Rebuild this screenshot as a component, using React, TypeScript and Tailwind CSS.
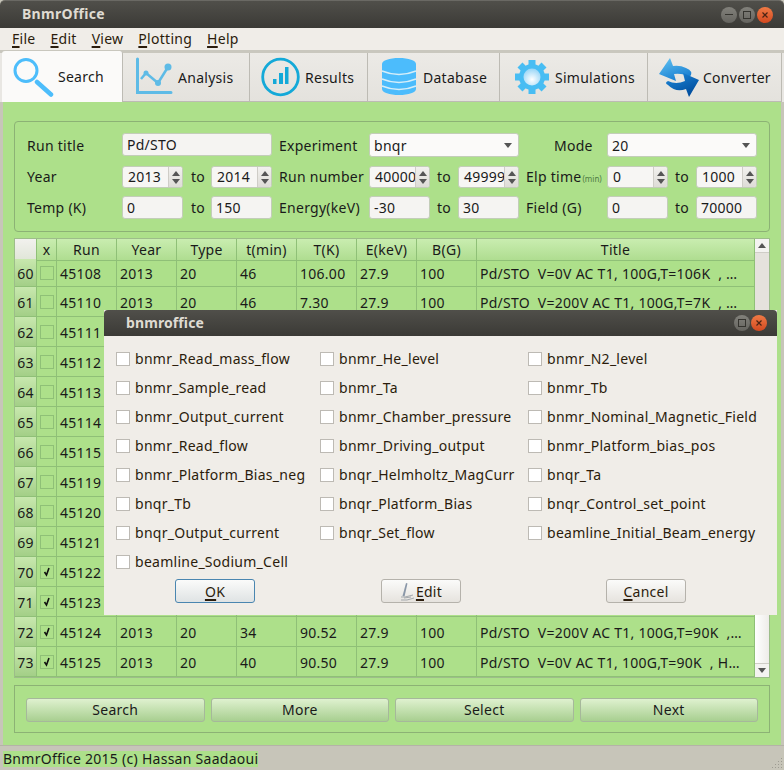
import type { ReactNode } from "react";

const titleBar = "bg-gradient-to-b from-[#504f4a] to-[#3b3a36]";

const WinBtn = ({ kind }: { kind: "min" | "max" | "close" }) => {
  if (kind === "close") {
    return (
      <span className="flex h-[16px] w-[16px] items-center justify-center rounded-full bg-gradient-to-b from-[#ef7a45] to-[#d2481f]">
        <svg width="8" height="8" viewBox="0 0 8 8">
          <path d="M1.5 1.5l5 5M6.5 1.5l-5 5" stroke="#4a2414" strokeWidth="1.2" />
        </svg>
      </span>
    );
  }
  return (
    <span className="flex h-[16px] w-[16px] items-center justify-center rounded-full bg-gradient-to-b from-[#82817b] to-[#65645f]">
      {kind === "min" ? (
        <span className="h-[1px] w-[8px] bg-[#35342f]" />
      ) : (
        <span className="h-[8px] w-[8px] border border-[#35342f]" />
      )}
    </span>
  );
};

const SearchIcon = () => (
  <svg width="42" height="42" viewBox="12 53 42 42" className="shrink-0">
    <circle cx="26" cy="67.5" r="11" fill="none" stroke="#4dbdfb" strokeWidth="3" />
    <path d="M37 79l14 12.5" stroke="#4dbdfb" strokeWidth="4.5" strokeLinecap="round" />
  </svg>
);

const AnalysisIcon = () => (
  <svg width="40" height="40" viewBox="134 56 40 40" className="shrink-0">
    <path d="M137.5 58v33.5H171" fill="none" stroke="#5ebbe6" strokeWidth="3" strokeLinecap="round" />
    <path d="M141 78l5-6 12 10 10-16" fill="none" stroke="#5ebbe6" strokeWidth="2.5" />
    <circle cx="146" cy="72" r="2.5" fill="#5ebbe6" />
    <circle cx="158" cy="82" r="3" fill="#5ebbe6" />
    <circle cx="168" cy="66" r="3.5" fill="#5ebbe6" />
  </svg>
);

const ResultsIcon = () => (
  <svg width="40" height="40" viewBox="260 56 40 40" className="shrink-0">
    <circle cx="280.5" cy="76" r="17.8" fill="none" stroke="#14a9d8" strokeWidth="2.8" />
    <path d="M273 78h3.5v5H273zM279 72h4v11h-4zM285 66h3.5v17H285z" fill="#14a9d8" />
  </svg>
);

const DatabaseIcon = () => (
  <svg width="36" height="40" viewBox="381 55 36 40" className="shrink-0">
    <path d="M382 62c0-3.500 7.500-6 17-6s17 2.500 17 6v25c0 3.500-7.500 6-17 6s-17-2.500-17-6z" fill="#4cbcfc" />
    <g fill="none" stroke="#d5eef9" strokeWidth="1.4">
      <path d="M382 69q17 7 34 0" />
      <path d="M382 77q17 7 34 0" />
      <path d="M382 84q17 7 34 0" />
    </g>
  </svg>
);

const GearIcon = () => (
  <svg width="38" height="38" viewBox="513 59 38 38" className="shrink-0">
    <defs>
      <radialGradient id="gearHole" cx="0.5" cy="0.65" r="0.7">
        <stop offset="0" stopColor="#ffffff" />
        <stop offset="1" stopColor="#8fd2f6" />
      </radialGradient>
    </defs>
    {[0, 45, 90, 135, 180, 225, 270, 315].map((a) => (
      <rect key={a} x="528.500" y="61" width="7" height="8" fill="#48bdf3" transform={`rotate(${a} 532 78)`} />
    ))}
    <circle cx="532" cy="78" r="13" fill="#48bdf3" />
    <circle cx="532" cy="78" r="8.500" fill="url(#gearHole)" />
  </svg>
);

const ConverterIcon = () => (
  <svg width="46" height="42" viewBox="656 55 46 42" className="shrink-0">
    <defs>
      <linearGradient id="arrowLight" x1="0" y1="0" x2="0.5" y2="1">
        <stop offset="0" stopColor="#63c4f2" />
        <stop offset="1" stopColor="#1a80d2" />
      </linearGradient>
      <linearGradient id="arrowDark" x1="0" y1="0" x2="0.6" y2="1">
        <stop offset="0" stopColor="#1f8bdc" />
        <stop offset="1" stopColor="#004c9c" />
      </linearGradient>
    </defs>
    <path d="M670 57L659 73l17 7-2-7q9-1 16 3 4-6-4-9-6-3-13-2z" fill="url(#arrowLight)" />
    <path d="M683 72l16 7-10 17-3-8q-10 4-18-4-4-2 0-4 8 4 17 0z" fill="url(#arrowDark)" />
  </svg>
);

const tabs = [
  { label: "Search", w: "w-[121px]", pl: "pl-[10px]", gap: "gap-[4px]", icon: <SearchIcon /> },
  { label: "Analysis", w: "w-[127px]", pl: "pl-[11px]", gap: "gap-[4px]", icon: <AnalysisIcon /> },
  { label: "Results", w: "w-[118px]", pl: "pl-[10px]", gap: "gap-[5px]", icon: <ResultsIcon /> },
  { label: "Database", w: "w-[132px]", pl: "pl-[13px]", gap: "gap-[6px]", icon: <DatabaseIcon /> },
  { label: "Simulations", w: "w-[148px]", pl: "pl-[13px]", gap: "gap-[4px]", icon: <GearIcon /> },
  { label: "Converter", w: "w-[134px]", pl: "pl-[8px]", gap: "gap-[1px]", icon: <ConverterIcon /> },
];

const Input = ({ value }: { value: string }) => (
  <div className="flex h-[23px] items-center overflow-hidden rounded-[3px] border border-[#c3cdb9] bg-[#f5f4f2] pl-[4px] text-[14px]">
    {value}
  </div>
);

const Spin = ({ value }: { value: string }) => (
  <div className="flex h-[22px] self-end overflow-hidden rounded-[3px] border border-[#c3cdb9] bg-[#f7f6f4]">
    <div className="flex-1 overflow-hidden whitespace-nowrap pl-[5px] text-[14px] leading-[20px]">{value}</div>
    <div className="flex w-[14px] shrink-0 flex-col items-center justify-center gap-[3px] border-l border-[#cfcdc7] bg-gradient-to-b from-[#f2f1ee] to-[#dedcd7]">
      <span className="h-0 w-0 border-x-[4px] border-b-[5px] border-x-transparent border-b-[#555]" />
      <span className="h-0 w-0 border-x-[4px] border-t-[5px] border-x-transparent border-t-[#555]" />
    </div>
  </div>
);

const Select = ({ value, span }: { value: string; span: string }) => (
  <div className={`${span} flex h-[24px] items-center justify-between rounded-[3px] border border-[#c3cdb9] bg-[#fbfaf9] pl-[4px] pr-[6px] text-[14px]`}>
    {value}
    <span className="h-0 w-0 border-x-[4px] border-t-[5px] border-x-transparent border-t-[#555]" />
  </div>
);

const Label = ({ children, className = "" }: { children: ReactNode; className?: string }) => (
  <div className={`flex items-center whitespace-nowrap text-[14px] ${className}`}>{children}</div>
);

type Row = { n: number; run: number; on?: boolean; t?: string; temp?: string; title?: string };

const rows: Row[] = [
  { n: 60, run: 45108, t: "46", temp: "106.00", title: "Pd/STO  V=0V AC T1, 100G,T=106K  , …" },
  { n: 61, run: 45110, t: "46", temp: "7.30", title: "Pd/STO  V=200V AC T1, 100G,T=7K  , …" },
  { n: 62, run: 45111 },
  { n: 63, run: 45112 },
  { n: 64, run: 45113 },
  { n: 65, run: 45114 },
  { n: 66, run: 45115 },
  { n: 67, run: 45119 },
  { n: 68, run: 45120 },
  { n: 69, run: 45121 },
  { n: 70, run: 45122, on: true },
  { n: 71, run: 45123, on: true },
  { n: 72, run: 45124, on: true, t: "34", temp: "90.52", title: "Pd/STO  V=200V AC T1, 100G,T=90K  ,…" },
  { n: 73, run: 45125, on: true, t: "40", temp: "90.50", title: "Pd/STO  V=0V AC T1, 100G,T=90K  , H…" },
];

const tableCols = "grid grid-cols-[22px_20px_60px_60px_60px_60px_60px_60px_60px_278px]";
const cell = "flex items-center overflow-hidden whitespace-pre border-r border-b border-[#8fc077] pl-[3px] pt-[1px] text-[14px]";
const head = "flex items-center justify-center border-r border-b border-[#8fc077] bg-gradient-to-b from-[#c9edb0] to-[#afdd90] text-[14px]";

const TableRow = ({ r }: { r: Row }) => {
  const filled = r.temp !== undefined;
  return (
    <div className={`${tableCols} ${r.n === 60 ? "h-[28px]" : "h-[30px]"}`}>
      <div className="flex items-center justify-center border-r border-b border-[#8fc077] bg-gradient-to-b from-[#c8e8ae] to-[#a3cf87] pt-[2px] text-[14px]">
        {r.n}
      </div>
      <div className="flex items-center justify-center border-r border-b border-[#8fc077]">
        <span className="flex h-[14px] w-[14px] items-center justify-center border border-[#8fc077]">
          {r.on && (
            <svg width="10" height="10" viewBox="0 0 10 10">
              <path d="M2.500 5l2 3 2.500-7" fill="none" stroke="#111" strokeWidth="1.600" />
            </svg>
          )}
        </span>
      </div>
      <div className={cell}>{r.run}</div>
      <div className={cell}>{filled && "2013"}</div>
      <div className={cell}>{filled && "20"}</div>
      <div className={cell}>{r.t}</div>
      <div className={cell}>{r.temp}</div>
      <div className={cell}>{filled && "27.9"}</div>
      <div className={cell}>{filled && "100"}</div>
      <div className={cell}>{r.title}</div>
    </div>
  );
};

const Mnemonic = ({ first, rest }: { first: string; rest: string }) => (
  <span>
    <span className="underline decoration-2 underline-offset-2">{first}</span>
    {rest}
  </span>
);

const channels = [
  "bnmr_Read_mass_flow", "bnmr_He_level", "bnmr_N2_level",
  "bnmr_Sample_read", "bnmr_Ta", "bnmr_Tb",
  "bnmr_Output_current", "bnmr_Chamber_pressure", "bnmr_Nominal_Magnetic_Field",
  "bnmr_Read_flow", "bnmr_Driving_output", "bnmr_Platform_bias_pos",
  "bnmr_Platform_Bias_neg", "bnqr_Helmholtz_MagCurr", "bnqr_Ta",
  "bnqr_Tb", "bnqr_Platform_Bias", "bnqr_Control_set_point",
  "bnqr_Output_current", "bnqr_Set_flow", "beamline_Initial_Beam_energy",
  "beamline_Sodium_Cell",
];

const Dialog = () => (
  <div className="absolute left-[104px] top-[310px] h-[305px] w-[673px] bg-[#f0ede8] text-[#2b1c0c]">
    <div className={`flex h-[26px] items-center justify-between rounded-t-[4px] pl-[22px] pr-[10px] ${titleBar}`}>
      <span className="pb-[2px] text-[14px] font-bold tracking-[0.1px] text-[#dfdbd2]">bnmroffice</span>
      <div className="flex gap-[1px]">
        <WinBtn kind="max" />
        <WinBtn kind="close" />
      </div>
    </div>
    <div className="grid grid-cols-[204px_208px_1fr] pl-[12px] pt-[8px]">
      {channels.map((c) => (
        <div key={c} className="flex h-[29px] items-center gap-[5px] whitespace-nowrap text-[14px]">
          <span className="h-[14px] w-[14px] shrink-0 border border-[#bdbab4] bg-white" />
          {c}
        </div>
      ))}
    </div>
    <div className="mt-[3px] flex text-[14px]">
      <button className="ml-[71px] h-[24px] w-[80px] rounded-[3px] border border-[#4a86b0] bg-gradient-to-b from-[#fbfbfa] to-[#dfe3e4]">
        <Mnemonic first="O" rest="K" />
      </button>
      <button className="ml-[126px] flex h-[24px] w-[80px] items-center justify-center rounded-[3px] border border-[#b5b2ab] bg-gradient-to-b from-[#fbfbfa] to-[#e6e3de]">
        <svg width="16" height="19" viewBox="0 0 16 19" className="shrink-0">
          <path d="M6 1L2.500 14l2 .5L7.500 1.500z" fill="#8a97a8" />
          <path d="M1 15h4l8-2M1 18h6l7-2M4 16l7-1" fill="none" stroke="#a5a9ad" strokeWidth="1" />
        </svg>
        <Mnemonic first="E" rest="dit" />
      </button>
      <button className="ml-[145px] h-[24px] w-[80px] rounded-[3px] border border-[#b5b2ab] bg-gradient-to-b from-[#fbfbfa] to-[#e6e3de]">
        <Mnemonic first="C" rest="ancel" />
      </button>
    </div>
  </div>
);

export default function App() {
  return (
    <div className="relative flex h-[770px] w-[784px] flex-col overflow-hidden bg-[#c7c5b9] font-['Noto_Sans',sans-serif] tracking-[0.27px] text-[#1a1a1a]">
      <div className={`flex h-[28px] shrink-0 items-center justify-between rounded-t-[5px] border-t border-[#6a6964] pl-[22px] pr-[11px] ${titleBar}`}>
        <span className="pb-[2px] text-[14px] font-bold tracking-[0.3px] text-[#dfdbd2]">BnmrOffice</span>
        <div className="flex gap-[2px]">
          <WinBtn kind="min" />
          <WinBtn kind="max" />
          <WinBtn kind="close" />
        </div>
      </div>

      <div className="flex h-[22px] shrink-0 items-center gap-[15px] bg-[#f0ede8] pb-[1px] pl-[12px] text-[14px] text-[#2b1c0c]">
        <Mnemonic first="F" rest="ile" />
        <Mnemonic first="E" rest="dit" />
        <Mnemonic first="V" rest="iew" />
        <Mnemonic first="P" rest="lotting" />
        <Mnemonic first="H" rest="elp" />
      </div>

      <div className="flex h-[52px] shrink-0 border-t-[3px] border-[#c9c7be] bg-[#e9e7e3] pl-[2px]">
        {tabs.map((t, i) => (
          <div
            key={t.label}
            className={`flex items-center border-b border-r border-[#bdbbb4] text-[14px] ${t.w} ${t.pl} ${t.gap} ${
              i === 0 ? "-mt-[2px] rounded-t-[3px] border-b-0 bg-[#fbfaf9]" : "bg-gradient-to-b from-[#eceae6] to-[#e4e2dd]"
            }`}
          >
            {t.icon}
            <span>{t.label}</span>
          </div>
        ))}
      </div>

      <div className="mx-[3px] flex h-[643px] shrink-0 flex-col bg-[#ade08a] pl-[11px] pt-[19px]">
        <div className="h-[111px] w-[756px] rounded-[4px] border border-[#8cb275] pl-[12px] pt-[11px]">
          <div className="grid grid-cols-[95px_61px_28px_61px_7px_90px_61px_28px_61px_7px_81px_61px_28px_61px] grid-rows-[24px_23px_23px] gap-y-[8px]">
            <Label>Run title</Label>
            <div className="col-span-3">
              <Input value="Pd/STO" />
            </div>
            <span />
            <Label>Experiment</Label>
            <Select value="bnqr" span="col-span-3" />
            <span />
            <Label className="pl-[28px]">Mode</Label>
            <Select value="20" span="col-span-3" />

            <Label>Year</Label>
            <Spin value="2013" />
            <Label className="pl-[8px]">to</Label>
            <Spin value="2014" />
            <span />
            <Label>Run number</Label>
            <Spin value="40000" />
            <Label className="pl-[7px]">to</Label>
            <Spin value="49999" />
            <span />
            <Label>
              <span>
                Elp time<span className="ml-[1px] text-[8px] tracking-normal text-[#4d7c44]">(min)</span>
              </span>
            </Label>
            <Spin value="0" />
            <Label className="pl-[7px]">to</Label>
            <Spin value="1000" />

            <Label>Temp (K)</Label>
            <Input value="0" />
            <Label className="pl-[8px]">to</Label>
            <Input value="150" />
            <span />
            <Label>Energy(keV)</Label>
            <Input value="-30" />
            <Label className="pl-[7px]">to</Label>
            <Input value="30" />
            <span />
            <Label>Field (G)</Label>
            <Input value="0" />
            <Label className="pl-[7px]">to</Label>
            <Input value="70000" />
          </div>
        </div>

        <div className="mt-[6px] flex h-[440px] w-[756px] border border-[#9dbd8a]">
          <div className="flex flex-col">
            <div className={`${tableCols} h-[20px]`}>
              <div className="border-r border-b border-[#8fc077] bg-gradient-to-b from-[#f2f1ee] to-[#e0e6d8]" />
              <div className={head}>x</div>
              {["Run", "Year", "Type", "t(min)", "T(K)", "E(keV)", "B(G)", "Title"].map((h) => (
                <div key={h} className={head}>
                  {h}
                </div>
              ))}
            </div>
            {rows.map((r) => (
              <TableRow key={r.n} r={r} />
            ))}
          </div>
          <div className="flex w-[14px] flex-col bg-[#e5e2dd]">
            <div className="flex h-[14px] items-center justify-center border-b border-[#cfcdc7] bg-[#f4f3f1]">
              <span className="h-0 w-0 border-x-[4px] border-b-[5px] border-x-transparent border-b-[#555]" />
            </div>
            <div className="flex-1" />
            <div className="h-[100px] bg-gradient-to-r from-[#ffffff] to-[#eeece9]" />
            <div className="flex h-[14px] items-center justify-center border-t border-[#cfcdc7] bg-[#f4f3f1]">
              <span className="h-0 w-0 border-x-[4px] border-t-[5px] border-x-transparent border-t-[#555]" />
            </div>
          </div>
        </div>

        <div className="mt-[7px] h-[48px] w-[756px] border border-[#8cb275] px-[11px] pt-[12px]">
          <div className="grid grid-cols-4 gap-[6px]">
            {["Search", "More", "Select", "Next"].map((b) => (
              <button
                key={b}
                className="h-[24px] rounded-[3px] border border-[#a6b89b] bg-gradient-to-b from-[#dff1cf] to-[#a8cf90] pb-[2px] text-[14px]"
              >
                {b}
              </button>
            ))}
          </div>
        </div>
      </div>

      <div className="flex h-[25px] shrink-0 items-end justify-between border-t border-[#b5b3a8] pb-[3px] pl-[3px] text-[14px]">
        <span className="bg-[#ade08a] leading-[16px]">BnmrOffice 2015 (c) Hassan Saadaoui</span>
        <svg width="12" height="12" viewBox="0 0 12 12" className="-mb-[2px]">
          <g fill="#9e9c92">
            <rect x="9" y="1" width="1" height="1" />
            <rect x="6" y="4" width="1" height="1" />
            <rect x="9" y="4" width="1" height="1" />
            <rect x="3" y="7" width="1" height="1" />
            <rect x="6" y="7" width="1" height="1" />
            <rect x="9" y="7" width="1" height="1" />
            <rect x="0" y="10" width="1" height="1" />
            <rect x="3" y="10" width="1" height="1" />
            <rect x="6" y="10" width="1" height="1" />
            <rect x="9" y="10" width="1" height="1" />
          </g>
        </svg>
      </div>

      <Dialog />
    </div>
  );
}
